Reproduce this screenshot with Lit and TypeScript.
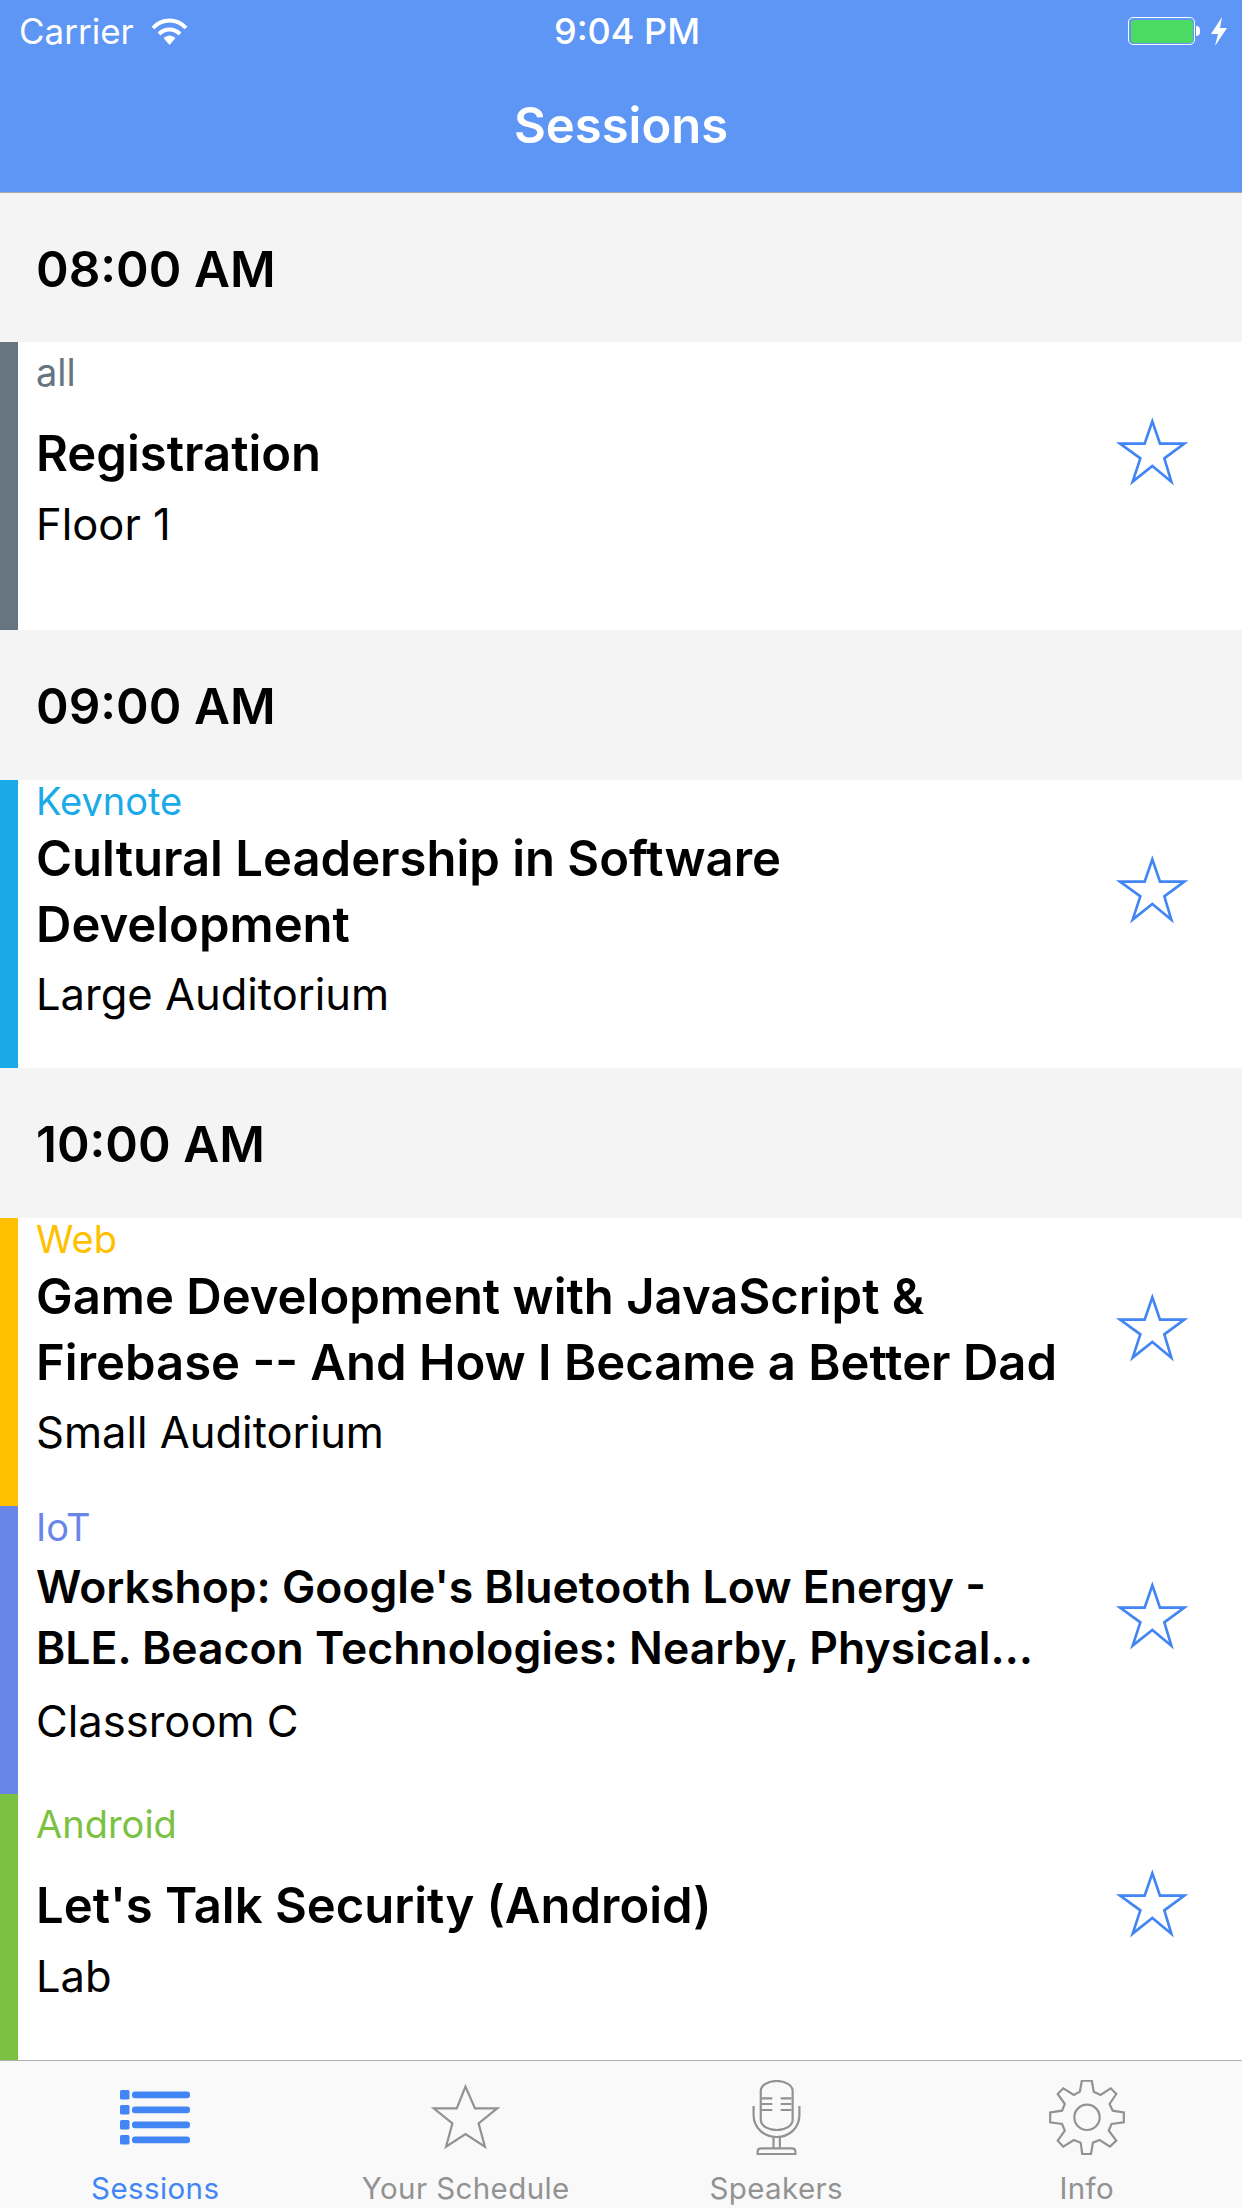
import { LitElement, html, css, svg } from "lit";
import { customElement } from "lit/decorators.js";

const starPts = "215,94 238,161 311,161 251,205 272,275 215,228 156,275 179,205 118,161 192,161";

interface Session { track: string; color: string; title: string; room: string; layout: string; }
interface Group { time: string; sessions: Session[]; }

const groups: Group[] = [
  { time: "08:00 AM", sessions: [{ track: "all", color: "#667580", title: "Registration", room: "Floor 1", layout: "one" }] },
  { time: "09:00 AM", sessions: [{ track: "Keynote", color: "#1aaae8", title: "Cultural Leadership in Software Development", room: "Large Auditorium", layout: "two clip" }] },
  { time: "10:00 AM", sessions: [
    { track: "Web", color: "#ffc000", title: "Game Development with JavaScript & Firebase -- And How I Became a Better Dad", room: "Small Auditorium", layout: "two" },
    { track: "IoT", color: "#6a85e8", title: "Workshop: Google's Bluetooth Low Energy - BLE. Beacon Technologies: Nearby, Physical…", room: "Classroom C", layout: "two small" },
    { track: "Android", color: "#7cc242", title: "Let's Talk Security (Android)", room: "Lab", layout: "one" },
  ] },
];

@customElement("app-root")
export class AppRoot extends LitElement {
  static styles = css`
    :host { display: flex; flex-direction: column; width: 1242px; height: 2208px; overflow: hidden; background: #fff; font-family: Inter, "Noto Sans", sans-serif; color: #000; }
    .top { background: #5e96f5; color: #fff; border-bottom: 1px solid #a9a9a9; height: 192px; flex: none; display: flex; flex-direction: column; }
    .status { height: 60px; display: grid; grid-template-columns: 1fr auto 1fr; align-items: center; font-size: 35px; padding: 2px 15px 0 19px; box-sizing: border-box; }
    .st-left { display: flex; align-items: center; gap: 17px; }
    .st-right { display: flex; align-items: center; justify-content: flex-end; gap: 10px; }
    .time { position: relative; left: 4px; font-size: 36px; font-weight: 500; }
    .battery { width: 67px; height: 28px; box-sizing: border-box; border: 1.5px solid #fff; border-radius: 5px; padding: 1.5px; position: relative; }
    .battery i { display: block; height: 100%; background: #4cd964; border-radius: 3px; }
    .battery::after { content: ""; position: absolute; left: 67px; top: 8px; width: 4px; height: 10px; background: #fff; border-radius: 0 4px 4px 0; }
    .bolt { margin-left: 6px; }
    .nav { flex: 1; display: flex; align-items: center; justify-content: center; font-size: 49px; font-weight: 600; padding-bottom: 1px; }
    main { flex: 1; min-height: 0; overflow: hidden; }
    .time-head { height: 150px; box-sizing: border-box; background: #f4f4f4; display: flex; align-items: center; padding: 2px 0 0 36px; font-size: 49.5px; font-weight: 600; }
    .time-head:first-child { height: 149px; }
    .row { height: 288px; display: flex; border-left: 18px solid; box-sizing: border-box; }
    .body { flex: 1; min-width: 0; padding-left: 18px; }
    .track { font-size: 38px; line-height: 42px; }
    .title { font-size: 49px; font-weight: 600; line-height: 66px; max-width: 1040px; }
    .room { font-size: 43.5px; line-height: 60px; }
    .one .track { padding-top: 9px; height: 51px; box-sizing: border-box; }
    .one .title { margin-top: 28px; }
    .one .room { margin-top: 7px; }
    .two .track { height: 36px; }
    .clip .track { overflow: hidden; }
    .two .title { margin-top: 10px; }
    .two .room { margin-top: 6px; }
    .small .title { font-size: 44.5px; line-height: 61px; margin-top: 15px; }
    .small .room { margin-top: 12px; }
    .star { flex: none; width: 76px; height: 71px; margin: 74px 52px 0 0; }
    footer { flex: none; height: 148px; box-sizing: border-box; border-top: 1px solid #b0b0b0; background: #f9f9f9; display: grid; grid-template-columns: repeat(4, 1fr); color: #929292; }
    .tab { display: flex; flex-direction: column; align-items: center; padding-top: 19px; font-size: 29.5px; letter-spacing: 0.4px; }
    .tab.on { color: #4285f4; }
    .tab svg { height: 75px; display: block; }
    .tab svg * { vector-effect: non-scaling-stroke; }
    .tab span { line-height: 36px; margin-top: 15px; }
  `;

  private starIcon() {
    return html`<svg class="star" viewBox="100 78 228 213"><polygon points=${starPts} fill="none" stroke="#4285f4" stroke-width="8"/></svg>`;
  }

  private tabs() {
    const list = svg`${[0, 1, 2, 3].map((i) => svg`
      <rect x="0" y=${10 + i * 15} width="9.5" height="9.5" rx="1.5" fill="#4285f4"/>
      <rect x="12" y=${11.6 + i * 15} width="58" height="6.6" rx="3" fill="#4285f4"/>`)}`;
    const ticks = [175, 192, 210].map((y) => svg`<path d="M356 ${y}H382M403 ${y}H430"/>`);
    return html`
      <div class="tab on"><svg width="70" viewBox="0 0 70 75">${list}</svg><span>Sessions</span></div>
      <div class="tab"><svg width="73" preserveAspectRatio="none" viewBox="1083 120 184 225"><polygon points="1175,140 1199,205 1255,205 1208,250 1224,320 1175,282 1126,320 1142,250 1095,205 1153,205" fill="none" stroke="#929292" stroke-width="2.2"/></svg><span>Your Schedule</span></div>
      <div class="tab"><svg width="49" preserveAspectRatio="none" viewBox="331 120 123 225" fill="none" stroke="#929292" stroke-width="2.2">
        <rect x="353" y="123" width="80" height="147" rx="40" ry="30"/>
        ${ticks}
        <path d="M335 198V225C335 262 360 291 393 291C426 291 450 262 450 225V198"/>
        <path d="M385 291V325M401 291V325"/>
        <path d="M345 342V335Q345 325 355 325H430Q440 325 440 335V342Z"/>
      </svg><span>Speakers</span></div>
      <div class="tab"><svg width="76" preserveAspectRatio="none" viewBox="1082 120 192 225" fill="none" stroke="#929292" stroke-width="2.2">
        <polygon points="1165,122 1190,122 1195,155 1212,165 1238,145 1252,162 1235,192 1243,212 1271,217 1271,247 1240,252 1233,272 1252,302 1236,320 1210,300 1193,308 1188,342 1166,342 1162,308 1145,300 1118,320 1104,302 1122,272 1115,252 1085,247 1085,217 1115,212 1122,192 1104,162 1118,145 1145,165 1160,155"/>
        <ellipse cx="1178" cy="232" rx="32" ry="38"/>
      </svg><span>Info</span></div>`;
  }

  render() {
    return html`
      <div class="top">
        <div class="status">
          <div class="st-left">Carrier
            <svg width="37" height="27" viewBox="0 0 37 27" fill="none" stroke="#fff" stroke-width="4">
              <path d="M2 10C11 0 26 0 35 10"/><path d="M8 16C14 10 23 10 29 16"/>
              <path d="M12.5 20Q18.5 15 24.5 20L18.5 27Z" fill="#fff" stroke="none"/>
            </svg>
          </div>
          <div class="time">9:04 PM</div>
          <div class="st-right">
            <div class="battery"><i></i></div>
            <svg class="bolt" width="16" height="29" viewBox="0 0 16 29"><path d="M11 0L0 17H7L4 29L16 11H9Z" fill="#fff"/></svg>
          </div>
        </div>
        <div class="nav">Sessions</div>
      </div>
      <main>
        ${groups.map((g) => html`
          <div class="time-head">${g.time}</div>
          ${g.sessions.map((s) => html`
            <div class="row ${s.layout}" style="border-left-color:${s.color}">
              <div class="body">
                <div class="track" style="color:${s.color}">${s.track}</div>
                <div class="title">${s.title}</div>
                <div class="room">${s.room}</div>
              </div>
              ${this.starIcon()}
            </div>`)}`)}
      </main>
      <footer>${this.tabs()}</footer>`;
  }
}
